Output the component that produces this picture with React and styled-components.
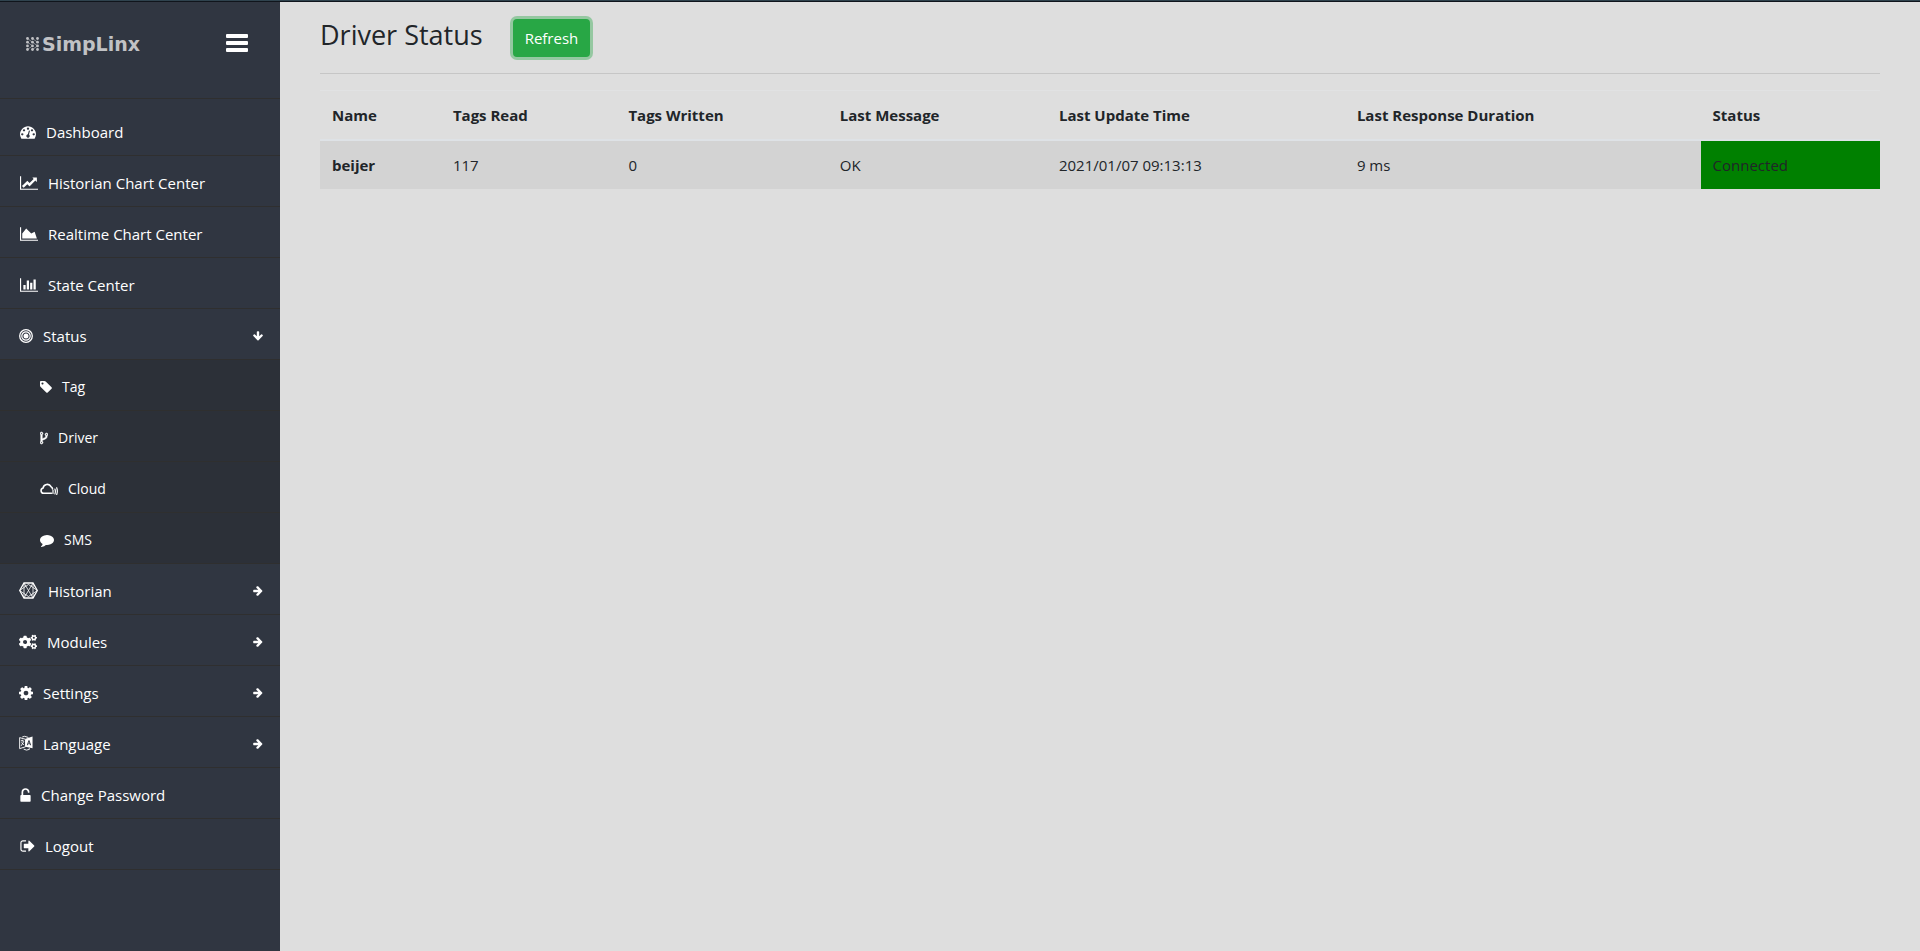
import React from "react";
import styled, { createGlobalStyle } from "styled-components";
import { FaCogs } from "react-icons/fa";

const GlobalStyle = createGlobalStyle`
  *, *::before, *::after { box-sizing: border-box; }
  body {
    margin: 0;
    background: #dedede;
    color: #212529;
    font-family: "Open Sans", "Noto Sans", sans-serif;
    font-size: 15px;
    line-height: 24px;
  }
`;

const Page = styled.div`
  display: flex;
  flex-direction: column;
  min-height: 100vh;
`;

const TopStrip = styled.div`
  height: 2px;
  background: #2f434e;
  border-bottom: 1px solid #10151c;
`;

const Body = styled.div`
  display: flex;
  flex: 1;
`;

const Sidebar = styled.aside`
  flex: 0 0 280px;
  background: #303641;
`;

const Brand = styled.header`
  display: flex;
  align-items: flex-start;
  justify-content: space-between;
  height: 97px;
  padding: 28px 32px 0 26px;
  border-bottom: 1px solid #2f2f2f;
`;

const Logo = styled.a`
  display: flex;
  align-items: center;
  gap: 3px;
  height: 28px;
  color: #c1c2c5;
  font: bold 19px/28px "DejaVu Sans", sans-serif;
  text-decoration: none;
`;

const MenuToggle = styled.button`
  display: flex;
  padding: 4px 0 0;
  border: 0;
  background: none;
  color: #fff;
  cursor: pointer;
`;

const MenuList = styled.ul`
  margin: 0;
  padding: ${(p) => (p.$nested ? 0 : "6px 0 0")};
  list-style: none;
  background: ${(p) => (p.$nested ? "#2c3038" : "transparent")};
`;

const MenuLink = styled.a`
  display: flex;
  align-items: center;
  gap: 10px;
  width: 100%;
  height: 51px;
  padding: 3px 17px 0 ${(p) => (p.$nested ? 40 : p.$group ? 19 : 20)}px;
  border: 0;
  border-bottom: 1px solid #2f2f2f;
  background: none;
  color: #fff;
  font-family: inherit;
  font-size: ${(p) => (p.$nested ? 14 : 15)}px;
  line-height: 24px;
  text-align: left;
  text-decoration: none;
  cursor: pointer;

  svg { flex: none; }
`;

const MenuLabel = styled.span`
  flex: 1;
`;

const Content = styled.main`
  flex: 1;
  min-width: 0;
  padding: 17px 40px 0;
`;

const TitleRow = styled.div`
  display: flex;
  align-items: flex-start;
  gap: 30px;
  padding-bottom: 16px;
  border-bottom: 1px solid #c6c6c6;
`;

const Title = styled.h2`
  margin: 0;
  font-size: 27px;
  font-weight: 500;
  line-height: 32px;
`;

const RefreshButton = styled.button`
  height: 38px;
  padding: 0 12px;
  border: 0;
  border-radius: 4px;
  background: #28a745;
  box-shadow: 0 0 0 3px rgba(40, 167, 69, 0.4);
  color: #fff;
  font: inherit;
  cursor: pointer;
`;

const Table = styled.table`
  width: 100%;
  margin-top: 16px;
  border-collapse: collapse;
  table-layout: fixed;
`;

const Column = styled.col`
  width: ${(p) => p.$share}%;
`;

const HeadCell = styled.th`
  padding: 12px;
  border-top: 1px solid #e1e2e3;
  border-bottom: 2px solid #dee2e6;
  font-weight: 700;
  text-align: left;
`;

const Row = styled.tr`
  background: #d3d3d3;
`;

const Cell = styled.td`
  padding: 12px;
  background: ${(p) => (p.$connected ? "#008000" : "transparent")};
  font-weight: ${(p) => (p.$strong ? 700 : 400)};
  text-align: left;
`;

const Glyph = ({ box, w, h, d }) => (
  <svg width={w} height={h} viewBox={box} fill="currentColor" aria-hidden="true">
    <path d={d} />
  </svg>
);

const ARROW =
  "M1600 960q0 54-37 91l-651 651q-39 37-91 37-51 0-90-37l-75-75q-38-38-38-91t38-91l293-293H245q-52 0-84.500-37.500T128 1024V896q0-53 32.500-90.500T245 768h704L656 474q-38-36-38-90t38-90l75-75q38-38 90-38 53 0 91 38l651 651q37 35 37 90z";

const ArrowIcon = ({ open }) => (
  <svg width="10" height="10" viewBox="96 160 1600 1600" fill="currentColor" aria-hidden="true">
    <path d={ARROW} transform={open ? "rotate(90 896 960)" : undefined} />
  </svg>
);

const DashboardIcon = () => (
  <Glyph
    box="0 0 1792 1792"
    w={16}
    h={16}
    d="M384 1152q0-53-37.5-90.5T256 1024t-90.500 37.500T128 1152t37.500 90.500T256 1280t90.500-37.500T384 1152zm192-448q0-53-37.500-90.500T448 576t-90.500 37.500T320 704t37.500 90.500T448 832t90.500-37.500T576 704zm428 481l101-382q6-26-7.500-48.500T1059 725t-48 6.500-30 39.500l-101 382q-60 5-107 43.500t-63 98.500q-20 77 20 146t117 89 146-20 89-117q16-60-6-117t-72-91zm660-33q0-53-37.500-90.500T1536 1024t-90.500 37.500-37.500 90.500 37.500 90.500 90.500 37.500 90.500-37.500 37.500-90.500zm-640-640q0-53-37.500-90.500T896 384t-90.500 37.500T768 512t37.500 90.500T896 640t90.500-37.500T1024 512zm448 192q0-53-37.500-90.500T1344 576t-90.500 37.500T1216 704t37.500 90.500T1344 832t90.500-37.500T1472 704zm320 448q0 261-141 483-19 29-54 29H195q-35 0-54-29Q0 1414 0 1152q0-182 71-348t191-286 286-191 348-71 348 71 286 191 191 286 71 348z"
  />
);

const LineChartIcon = () => (
  <Glyph
    box="0 0 2048 1792"
    w={18}
    h={16}
    d="M2048 1536v128H0V128h128v1408h1920zM1920 288v435q0 21-19.500 29.500T1865 745l-121-121-633 633q-10 10-23 10t-23-10l-233-233-416 416-192-192 585-585q10-10 23-10t23 10l233 233 464-464-121-121q-16-16-7.500-35.500T1453 256h435q14 0 23 9t9 23z"
  />
);

const AreaChartIcon = () => (
  <Glyph
    box="0 0 2048 1792"
    w={18}
    h={16}
    d="M2048 1536v128H0V128h128v1408h1920zM1664 640l256 768H256V832l448-576 576 576z"
  />
);

const BarChartIcon = () => (
  <Glyph
    box="0 0 2048 1792"
    w={18}
    h={16}
    d="M640 896v512H384V896h256zm384-512v1024H768V384h256zm1024 1152v128H0V128h128v1408h1920zm-640-896v768h-256V640h256zm384-384v1152h-256V256h256z"
  />
);

const TargetIcon = () => (
  <svg width="14" height="14" viewBox="0 0 14 14" fill="none" stroke="currentColor" aria-hidden="true">
    <circle cx="7" cy="7" r="6.300" strokeWidth="1.300" />
    <circle cx="7" cy="7" r="4.200" strokeWidth="1.200" />
    <circle cx="7" cy="7" r="2.500" fill="currentColor" stroke="none" />
  </svg>
);

const TagIcon = () => (
  <Glyph
    box="128 0 1536 1792"
    w={12}
    h={14}
    d="M576 448q0-53-37.500-90.500T448 320t-90.500 37.500T320 448t37.500 90.500T448 576t90.500-37.500T576 448zm1067 576q0 53-37 90l-491 492q-39 37-91 37-53 0-90-37L219 890q-38-37-64.500-101T128 672V256q0-52 38-90t90-38h416q53 0 117 26.500T891 219l715 714q37 39 37 91z"
  />
);

const ForkIcon = () => (
  <svg width="8" height="14" viewBox="384 0 1024 1792" fill="currentColor" stroke="currentColor" strokeWidth="70" aria-hidden="true">
    <path d="M672 1472q0-40-28-68t-68-28-68 28-28 68 28 68 68 28 68-28 28-68zm0-1152q0-40-28-68t-68-28-68 28-28 68 28 68 68 28 68-28 28-68zm640 128q0-40-28-68t-68-28-68 28-28 68 28 68 68 28 68-28 28-68zm96 0q0 52-26 96.500t-70 69.500q-2 287-226 414-67 38-203 81-128 40-169.500 71t-41.500 100v26q44 25 70 69.500t26 96.500q0 80-56 136t-136 56-136-56-56-136q0-52 26-96.500t70-69.500V486q-44-25-70-69.500T384 320q0-80 56-136t136-56 136 56 56 136q0 52-26 96.500T672 486v497q54-26 154-57 55-17 87.500-29.500t70.500-31 59-39.500 40.500-51 28-69.500T1120 614q-44-25-70-69.500t-26-96.500q0-80 56-136t136-56 136 56 56 136z" />
  </svg>
);

const CloudIcon = () => (
  <svg width="18" height="12" viewBox="0 0 18 12" fill="none" stroke="currentColor" strokeLinecap="round" aria-hidden="true">
    <path strokeWidth="1.600" d="M11.500 10.300H3.500a2.700 2.700 0 0 1-.4-5.300A4.200 4.200 0 0 1 11 3.700a2.500 2.500 0 0 1 1.500 2.200" />
    <path strokeWidth="1.200" d="M13 7.200v3.200M14.900 6q1 2.500 0 5M16.700 4.700q1.300 3.500 0 6.800" />
  </svg>
);

const CommentIcon = () => (
  <Glyph
    box="0 0 1792 1792"
    w={14}
    h={14}
    d="M1792 896q0 174-120 321.500t-326 233-450 85.500q-70 0-145-8-198 175-460 242-49 14-114 22-17 2-30.500-9t-17.500-29v-1q-3-4-.5-12t2-10 4.500-9.500l6-9 7-8.500 8-9q7-8 31-34.500t34.500-38 31-39.500 32.500-51 27-59 26-76q-157-89-247.500-220T0 896q0-130 71-248.500T262 443t286-136.500T896 256q244 0 450 85.500t326 233T1792 896z"
  />
);

const HexagonIcon = () => (
  <svg width="19" height="17" viewBox="0 0 19 17" fill="none" stroke="currentColor" aria-hidden="true">
    <path strokeWidth="1.300" d="M5 1h9l4.300 7.500L14 16H5L.7 8.500z" />
    <path strokeWidth=".8" d="M5 1l9 15M14 1L5 16M5 1v15M14 1v15M5 5.500l4.500-3 4.500 3M5 11.500l4.500 3 4.500-3M.7 8.500L5 5.500M.7 8.500l4.300 3M18.300 8.500L14 5.500M18.300 8.500l-4.300 3" />
  </svg>
);

const CogIcon = () => (
  <Glyph
    box="128 128 1536 1536"
    w={14}
    h={14}
    d="M1152 896q0-106-75-181t-181-75-181 75-75 181 75 181 181 75 181-75 75-181zm512-109v222q0 12-8 23t-20 13l-185 28q-19 54-39 91 35 50 107 138 10 12 10 25t-9 23q-27 37-99 108t-94 71q-12 0-26-9l-138-108q-44 23-91 38-16 136-29 186-7 28-36 28H785q-14 0-24.500-8.500T749 1634l-28-184q-49-16-90-37l-141 107q-10 9-25 9-14 0-25-11-126-114-165-168-7-10-7-23 0-12 8-23 15-21 51-66.500t54-70.500q-27-50-41-99l-183-27q-13-2-21-12.500t-8-23.500V783q0-12 8-23t19-13l186-28q14-46 39-92-40-57-107-138-10-12-10-24 0-10 9-23 26-36 98.500-107.500T465 263q13 0 26 10l138 107q44-23 91-38 16-136 29-186 7-28 36-28h222q14 0 24.500 8.500T1043 158l28 184q49 16 90 37l142-107q9-9 24-9 13 0 25 10 129 119 165 170 7 8 7 22 0 12-8 23-15 21-51 66.500t-54 70.500q26 50 41 98l183 28q13 2 21 12.500t8 23.500z"
  />
);

const LanguageIcon = () => (
  <svg width="14" height="17" viewBox="0 0 15 17" fill="none" stroke="currentColor" aria-hidden="true">
    <path fill="currentColor" stroke="none" fillRule="evenodd" d="M7 3.500L14.500 1v12.500L7 12zM10.200 5L8.300 10.500h1l.4-1.200h1.800l.5 1.200h1L11.200 5zm.5 1.500l.5 1.900H10z" />
    <path d="M.7 2.200L7 4v8L.7 14zM2 5.500l3.500.5M3.500 4.500v1.300M5 6.500L2.300 11M2.500 7.500L5.500 10M3.500 1.500L6 .8l4 1.200M5 14.500q3 2 6 .3M11 13.500v1.500" />
  </svg>
);

const UnlockIcon = () => (
  <Glyph
    box="320 0 1152 1792"
    w={11}
    h={16}
    d="M1376 896q40 0 68 28t28 68v576q0 40-28 68t-68 28H416q-40 0-68-28t-28-68V992q0-40 28-68t68-28h32V576q0-185 131.500-316.500T896 128t316.500 131.500T1344 576q0 26-19 45t-45 19h-64q-26 0-45-19t-19-45q0-106-75-181t-181-75-181 75-75 181v320h736z"
  />
);

const LogoutIcon = () => (
  <Glyph
    box="64 0 1600 1792"
    w={15}
    h={16}
    d="M704 1440q0 4 1 20t.5 26.500-3 23.500-10 19.500-20.500 6.500H352q-119 0-203.500-84.500T64 1248V544q0-119 84.500-203.500T352 256h320q13 0 22.500 9.500T704 288q0 4 1 20t.5 26.500-3 23.500-10 19.500T672 384H352q-66 0-113 47t-47 113v704q0 66 47 113t113 47h312l11.500 1 11.500 3 8 5.500 7 9 2 13.500zm928-544q0 26-19 45l-544 544q-19 19-45 19t-45-19-19-45v-288H512q-26 0-45-19t-19-45V704q0-26 19-45t45-19h448V352q0-26 19-45t45-19 45 19l544 544q19 19 19 45z"
  />
);

const LogoMark = () => (
  <svg width="13" height="14" viewBox="0 0 13 14" fill="currentColor" aria-hidden="true">
    {[1.5, 5.2, 8.9, 12.5].map((y) =>
      [1.5, 6.5, 11.5].map((x) => <circle key={`${x}-${y}`} cx={x} cy={y} r="1.400" />)
    )}
    <path d="M1.500 1.500l5 3.700M1.500 5.200l5 3.700-5 3.600M6.500 1.500l5 3.700M6.500 5.200l5 3.700-5 3.600" fill="none" stroke="currentColor" strokeWidth=".6" />
  </svg>
);

const BarsIcon = () => (
  <svg width="22" height="18" viewBox="0 0 22 18" fill="currentColor" aria-hidden="true">
    <rect width="22" height="4" rx="1" />
    <rect y="7" width="22" height="4" rx="1" />
    <rect y="14" width="22" height="4" rx="1" />
  </svg>
);

const menu = [
  { label: "Dashboard", icon: <DashboardIcon /> },
  { label: "Historian Chart Center", icon: <LineChartIcon /> },
  { label: "Realtime Chart Center", icon: <AreaChartIcon /> },
  { label: "State Center", icon: <BarChartIcon /> },
  {
    label: "Status",
    icon: <TargetIcon />,
    group: true,
    children: [
      { label: "Tag", icon: <TagIcon /> },
      { label: "Driver", icon: <ForkIcon /> },
      { label: "Cloud", icon: <CloudIcon /> },
      { label: "SMS", icon: <CommentIcon /> },
    ],
  },
  { label: "Historian", icon: <HexagonIcon />, group: true },
  { label: "Modules", icon: <FaCogs size={18} />, group: true },
  { label: "Settings", icon: <CogIcon />, group: true },
  { label: "Language", icon: <LanguageIcon />, group: true },
  { label: "Change Password", icon: <UnlockIcon /> },
  { label: "Logout", icon: <LogoutIcon /> },
];

const columns = [
  { label: "Name", share: 7.75 },
  { label: "Tags Read", share: 11.25 },
  { label: "Tags Written", share: 13.55 },
  { label: "Last Message", share: 14.05 },
  { label: "Last Update Time", share: 19.1 },
  { label: "Last Response Duration", share: 22.8 },
  { label: "Status", share: 11.5 },
];

const drivers = [
  { name: "beijer", read: 117, written: 0, message: "OK", updated: "2021/01/07 09:13:13", duration: "9 ms", status: "Connected" },
];

const MenuItem = ({ item, nested }) => (
  <li>
    <MenuLink
      as={item.group ? "button" : "a"}
      href={item.group ? undefined : "#"}
      type={item.group ? "button" : undefined}
      aria-expanded={item.group ? Boolean(item.children) : undefined}
      $group={item.group}
      $nested={nested}
    >
      {item.icon}
      <MenuLabel>{item.label}</MenuLabel>
      {item.group && <ArrowIcon open={Boolean(item.children)} />}
    </MenuLink>
    {item.children && (
      <MenuList $nested>
        {item.children.map((child) => (
          <MenuItem key={child.label} item={child} nested />
        ))}
      </MenuList>
    )}
  </li>
);

export default function App() {
  return (
    <Page>
      <GlobalStyle />
      <TopStrip />
      <Body>
        <Sidebar>
          <Brand>
            <Logo href="#">
              <LogoMark />
              SimpLinx
            </Logo>
            <MenuToggle type="button" aria-label="Toggle menu">
              <BarsIcon />
            </MenuToggle>
          </Brand>
          <nav>
            <MenuList>
              {menu.map((item) => (
                <MenuItem key={item.label} item={item} />
              ))}
            </MenuList>
          </nav>
        </Sidebar>
        <Content>
          <TitleRow>
            <Title>Driver Status</Title>
            <RefreshButton type="button">Refresh</RefreshButton>
          </TitleRow>
          <Table>
            <colgroup>
              {columns.map((c) => (
                <Column key={c.label} $share={c.share} />
              ))}
            </colgroup>
            <thead>
              <tr>
                {columns.map((c) => (
                  <HeadCell key={c.label} scope="col">{c.label}</HeadCell>
                ))}
              </tr>
            </thead>
            <tbody>
              {drivers.map((d) => (
                <Row key={d.name}>
                  <Cell as="th" scope="row" $strong>{d.name}</Cell>
                  <Cell>{d.read}</Cell>
                  <Cell>{d.written}</Cell>
                  <Cell>{d.message}</Cell>
                  <Cell>{d.updated}</Cell>
                  <Cell>{d.duration}</Cell>
                  <Cell $connected={d.status === "Connected"}>{d.status}</Cell>
                </Row>
              ))}
            </tbody>
          </Table>
        </Content>
      </Body>
    </Page>
  );
}
